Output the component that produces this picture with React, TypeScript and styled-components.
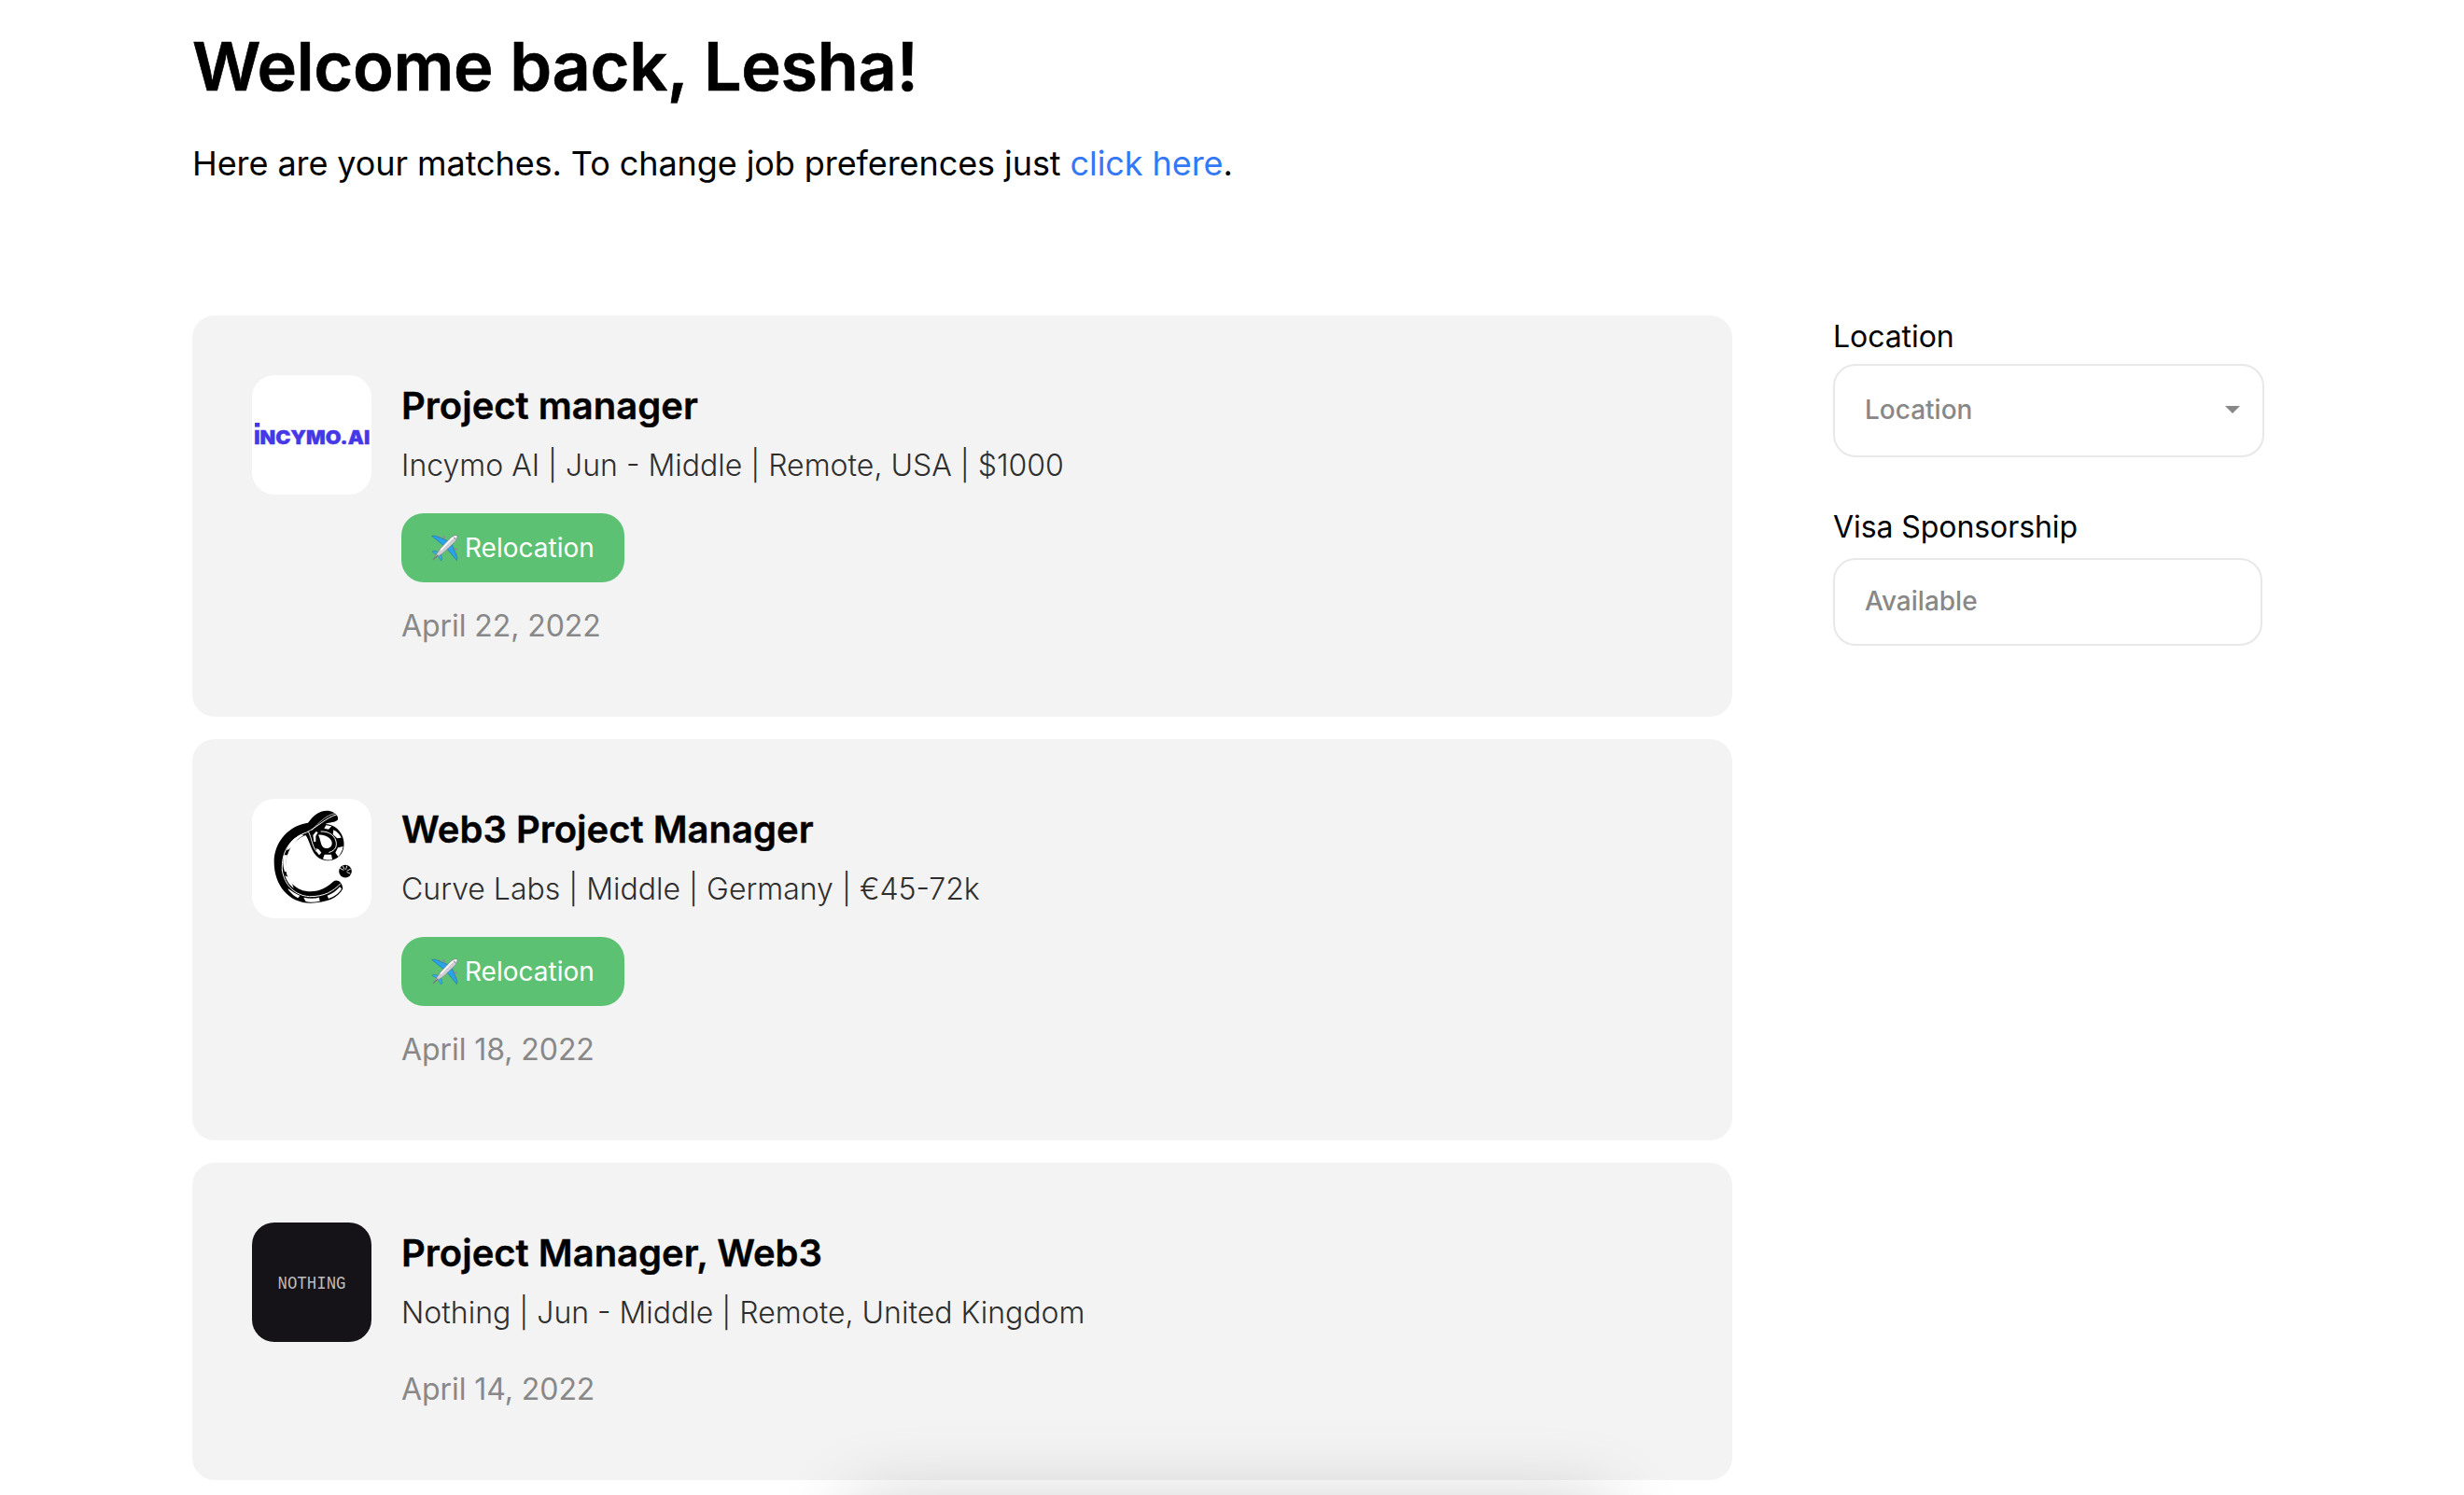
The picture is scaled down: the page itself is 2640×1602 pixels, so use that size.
import React from 'react';
import styled, { createGlobalStyle } from 'styled-components';

const GlobalStyle = createGlobalStyle`
  *, *::before, *::after { box-sizing: border-box; }
  html, body { margin: 0; background: #fff; }
  body {
    font-family: Inter, "Liberation Sans", sans-serif;
    color: #000;
    overflow: hidden;
  }
  h1, h2, p { margin: 0; }
`;

const Page = styled.div`
  position: relative;
  height: 1602px;
  overflow: hidden;
  padding: 27px 206px 0;
`;

const Heading = styled.h1`
  font-size: 72px;
  line-height: 88px;
  font-weight: 600;
  letter-spacing: -0.3px;
  -webkit-text-stroke: 0.7px #000;
`;

const Lead = styled.p`
  margin-top: 38px;
  font-size: 36px;
  line-height: 44px;
  letter-spacing: -0.08px;
`;

const Link = styled.a`
  color: #3478f6;
  text-decoration: none;
`;

const Columns = styled.div`
  display: flex;
  align-items: flex-start;
  gap: 108px;
  margin-top: 141px;
`;

const JobList = styled.main`
  display: flex;
  flex-direction: column;
  gap: 24px;
  width: 1650px;
`;

const Card = styled.article`
  display: flex;
  gap: 32px;
  padding: 64px 64px 77px;
  border-radius: 24px;
  background: #f3f3f3;
`;

const LogoTile = styled.div<{ $dark?: boolean }>`
  flex: none;
  width: 128px;
  height: 128px;
  border-radius: 24px;
  overflow: hidden;
  background: ${(p) => (p.$dark ? '#151317' : '#fff')};

  svg { display: block; width: 128px; height: 128px; }
`;

const Details = styled.div`
  display: flex;
  flex-direction: column;
  align-items: flex-start;
  padding-top: 9px;
`;

const JobTitle = styled.h2`
  font-size: 40px;
  line-height: 48px;
  font-weight: 600;
  -webkit-text-stroke: 0.4px #000;
`;

const Meta = styled.p`
  margin-top: 20px;
  font-size: 32px;
  line-height: 40px;
  font-weight: 300;
  color: #2e2e2e;
`;

const Badge = styled.span`
  display: flex;
  align-items: center;
  gap: 7px;
  height: 74px;
  margin-top: 31px;
  padding: 0 32px;
  border-radius: 24px;
  background: #5dc173;
  color: #fff;
  font-size: 28px;
  line-height: 34px;

  svg { display: block; width: 29px; height: 29px; }
`;

const PostedOn = styled.p<{ $afterBadge: boolean }>`
  margin-top: ${(p) => (p.$afterBadge ? 27 : 42)}px;
  font-size: 32px;
  line-height: 40px;
  letter-spacing: -0.07px;
  color: #888;
`;

const Filters = styled.aside`
  display: flex;
  flex-direction: column;
  width: 462px;
  padding-top: 3px;
`;

const FilterLabel = styled.label`
  font-size: 32px;
  line-height: 40px;
  letter-spacing: -0.07px;

  div + & { margin-top: 55px; }
`;

const Field = styled.div<{ $width: number; $height: number; $gap: number }>`
  display: flex;
  align-items: center;
  justify-content: space-between;
  width: ${(p) => p.$width}px;
  height: ${(p) => p.$height}px;
  margin-top: ${(p) => p.$gap}px;
  padding: 0 24px 2px 32px;
  border: 2px solid #e8e8e8;
  border-radius: 24px;
  color: #888;
  font-size: 28px;
  line-height: 34px;
  font-weight: 500;
`;

const Caret = styled.span`
  border: 8.5px solid transparent;
  border-top: 8px solid #888;
  border-bottom: 0;
`;

const BottomBar = styled.div`
  position: absolute;
  left: 908px;
  top: 1606px;
  width: 822px;
  height: 120px;
  border-radius: 24px;
  background: #fff;
  box-shadow: 0 0 80px rgba(0, 0, 0, 0.18);
`;

const IncymoLogo = () => (
  <svg viewBox="0 0 128 128">
    <rect x="3" y="51" width="5.3" height="4.6" fill="#4638e6" />
    <text
      x="2.2"
      y="74.3"
      textLength="124"
      lengthAdjust="spacingAndGlyphs"
      fontFamily="Inter, sans-serif"
      fontWeight="900"
      fontSize="20.6"
      fill="#4638e6"
      stroke="#4638e6"
      strokeWidth="0.4"
    >
      INCYMO.AI
    </text>
  </svg>
);

const CurveLogo = () => (
  <svg viewBox="30 33 384 384">
    <path
      d="M306 92 C296 68 262 66 240 80 C226 88 218 100 210 110 C150 118 101 170 101 236 C101 312 150 368 218 368 C268 368 308 352 322 322 C320 300 304 290 291 299 C270 318 250 330 218 331 C172 331 139 296 138 252 C138 206 160 166 202 150 C212 162 216 182 226 202 C240 228 268 238 294 228 C320 218 330 190 324 164 C318 136 296 116 266 114 C278 108 300 110 306 100 Z"
      fill="#000"
    />
    <g fill="none" stroke="#fff" strokeLinecap="round">
      <path d="M301 84 C270 92 240 124 205 141 C150 160 124 205 127 262" strokeWidth="3" />
      <path d="M296 80 C270 84 242 112 222 134" strokeWidth="2" />
      <path d="M127 262 C134 312 170 344 214 347 C262 348 292 330 314 306" strokeWidth="3" />
      <path d="M212 140 C222 158 222 184 238 204" strokeWidth="3" />
    </g>
    <g fill="#fff">
      <path d="M188 148 C164 158 148 176 141 199 C152 197 160 184 170 172 C176 162 186 156 197 150 Z" />
      <path d="M133 214 C128 230 129 250 135 268 L141 266 C138 246 139 228 144 214 Z" />
      <path d="M136 280 C142 300 154 314 164 320 L156 298 L146 284 Z" />
      <path d="M146 324 C158 340 170 348 178 352 L184 344 C172 340 158 330 146 322 Z" />
      <path d="M196 350 C214 354 232 354 246 350 L248 362 C230 366 212 366 202 362 Z" />
      <path d="M272 344 C290 338 304 326 312 316 L318 322 C308 340 290 350 276 354 Z" />
      <path d="M268 118 L286 121 L276 131 L262 128 Z" />
      <path d="M292 133 C303 138 312 148 317 158 L304 160 L290 148 Z" />
      <path d="M323 186 C321 200 314 212 307 219 L298 206 L306 190 Z" />
      <path d="M285 212 L288 228 C277 231 266 230 258 226 L263 212 Z" />
      <path d="M226 150 L236 138 L242 141 L235 153 L235 170 L229 172 Z" />
      <path d="M236 192 L245 196 L253 206 L246 214 C239 207 236 200 236 192 Z" />
      <path d="M243 149 C262 146 286 158 287 174 C288 188 276 195 264 191 C249 186 252 164 243 149 Z" />
    </g>
    <path
      d="M252 138 C278 136 300 154 301 176 C302 192 292 202 278 205"
      fill="none"
      stroke="#fff"
      strokeWidth="3"
      strokeLinecap="round"
    />
    <circle cx="330" cy="266" r="20.5" fill="#000" />
    <g stroke="#fff" strokeLinecap="round" strokeWidth="2.6">
      <path d="M324 262 L313 256" />
      <path d="M327 259 L322 249" />
      <path d="M332 259 L335 249" />
      <path d="M336 264 L346 259" />
      <path d="M336 269 L345 273" />
    </g>
  </svg>
);

const NothingLogo = () => (
  <svg viewBox="0 0 128 128">
    <defs>
      <pattern id="dots" width="2" height="2" patternUnits="userSpaceOnUse">
        <rect width="2" height="2" fill="#8b8a8c" />
        <circle cx="1" cy="1" r="0.8" fill="#fff" />
      </pattern>
    </defs>
    <text
      x="27.5"
      y="70.5"
      textLength="73"
      lengthAdjust="spacingAndGlyphs"
      fontFamily="'Liberation Mono', monospace"
      fontSize="20"
      fill="url(#dots)"
    >
      NOTHING
    </text>
  </svg>
);

const PlaneIcon = () => (
  <svg viewBox="0 0 29 29">
    <g fill="#8f8f93">
      <circle cx="8.4" cy="2.6" r="1.5" />
      <circle cx="13.6" cy="2.7" r="1.6" />
      <circle cx="26.3" cy="15.4" r="1.6" />
      <circle cx="26.6" cy="20.8" r="1.5" />
    </g>
    <path d="M0.6 1.4 L4 1 L19.4 7.2 L14.4 12.4 Z" fill="#2aa3e8" stroke="#1c72ac" strokeWidth="0.6" />
    <path d="M27.4 27.6 L28 24.6 L21.8 9.6 L16.6 14.6 Z" fill="#2aa3e8" stroke="#1c72ac" strokeWidth="0.6" />
    <path d="M1 18.2 L3 17.2 L10 19 L7 22 Z" fill="#39aeea" stroke="#1c72ac" strokeWidth="0.5" />
    <path d="M10.6 28 L11.8 26 L10.2 19.4 L7 22 Z" fill="#39aeea" stroke="#1c72ac" strokeWidth="0.5" />
    <path d="M27.8 0.8 C25.6 -0.2 22.6 1.6 20.4 3.8 L10.2 14.4 C7.6 17.6 5 21.4 3.4 25 C6.8 23.6 10.8 21.2 14 18.6 L24.8 8.2 C27 6 28.8 3 27.8 0.8 Z" fill="#d0d0d4" stroke="#808086" strokeWidth="0.7" />
    <path d="M26.6 2 C24.6 2 22.6 3.6 21 5.2 L10.6 16" fill="none" stroke="#fff" strokeWidth="1.7" strokeLinecap="round" />
    <path d="M23.8 2.5 L26.4 5" stroke="#66666c" strokeWidth="0.8" />
    <path d="M7 22 L2.2 26.6" stroke="#77777c" strokeWidth="1.1" strokeLinecap="round" />
  </svg>
);

interface Job {
  title: string;
  meta: string;
  date: string;
  relocation: boolean;
  dark?: boolean;
  Logo: React.FC;
}

const jobs: Job[] = [
  {
    title: 'Project manager',
    meta: 'Incymo AI | Jun - Middle | Remote, USA | $1000',
    date: 'April 22, 2022',
    relocation: true,
    Logo: IncymoLogo,
  },
  {
    title: 'Web3 Project Manager',
    meta: 'Curve Labs | Middle | Germany | €45-72k',
    date: 'April 18, 2022',
    relocation: true,
    Logo: CurveLogo,
  },
  {
    title: 'Project Manager, Web3',
    meta: 'Nothing | Jun - Middle | Remote, United Kingdom',
    date: 'April 14, 2022',
    relocation: false,
    dark: true,
    Logo: NothingLogo,
  },
];

const JobCard = ({ title, meta, date, relocation, dark, Logo }: Job) => (
  <Card>
    <LogoTile $dark={dark}>
      <Logo />
    </LogoTile>
    <Details>
      <JobTitle>{title}</JobTitle>
      <Meta>{meta}</Meta>
      {relocation && (
        <Badge>
          <PlaneIcon />
          Relocation
        </Badge>
      )}
      <PostedOn $afterBadge={relocation}>{date}</PostedOn>
    </Details>
  </Card>
);

export default function App() {
  return (
    <Page>
      <GlobalStyle />
      <header>
        <Heading>Welcome back, Lesha!</Heading>
        <Lead>
          Here are your matches. To change job preferences just <Link>click here</Link>.
        </Lead>
      </header>
      <Columns>
        <JobList>
          {jobs.map((job) => (
            <JobCard key={job.title} {...job} />
          ))}
        </JobList>
        <Filters>
          <FilterLabel>Location</FilterLabel>
          <Field $width={462} $height={100} $gap={9}>
            Location
            <Caret />
          </Field>
          <FilterLabel>Visa Sponsorship</FilterLabel>
          <Field $width={460} $height={94} $gap={13}>
            Available
          </Field>
        </Filters>
      </Columns>
      <BottomBar />
    </Page>
  );
}
